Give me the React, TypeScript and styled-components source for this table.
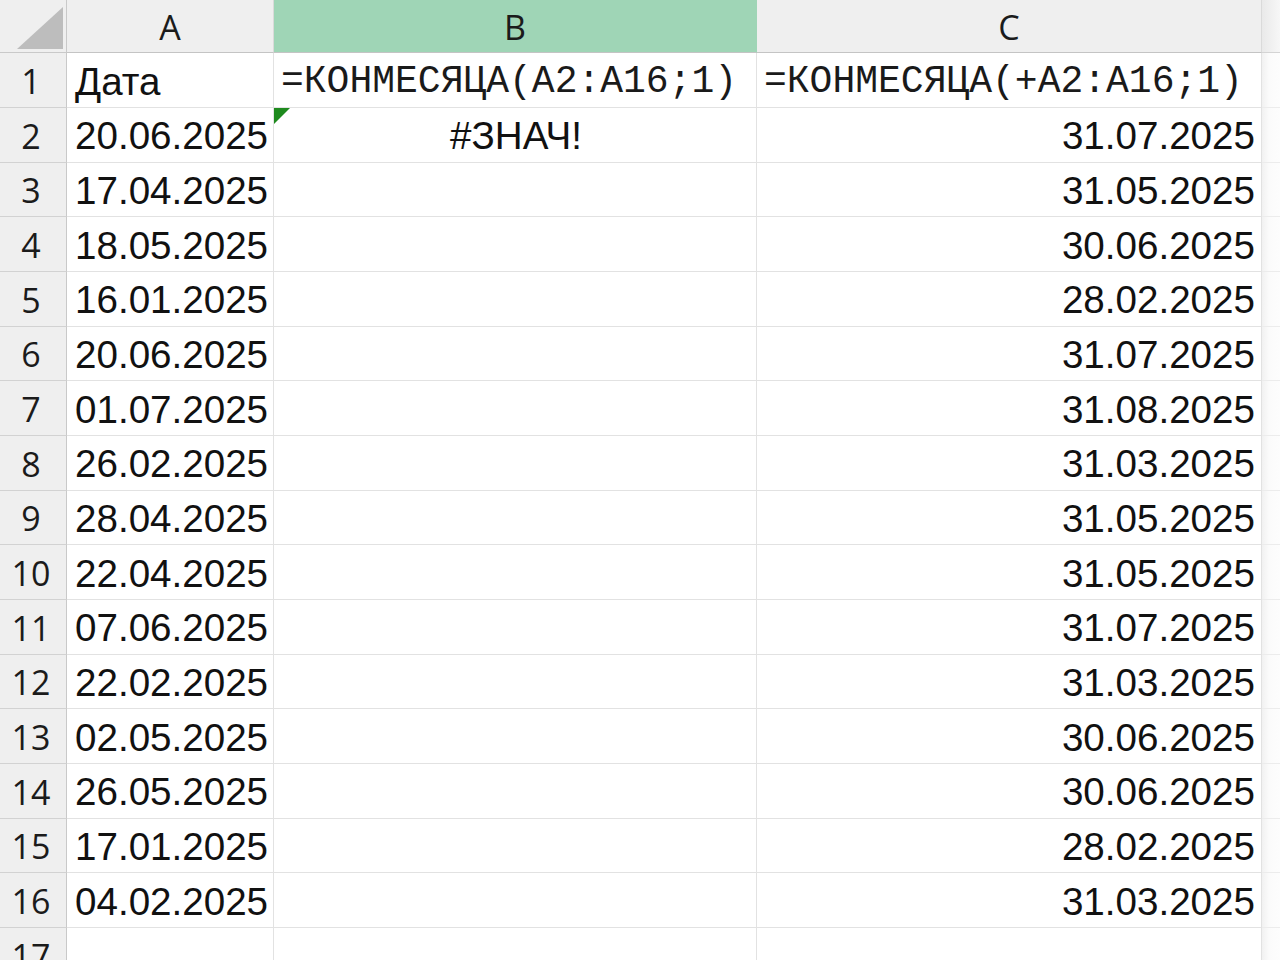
import React from "react";
import styled, { createGlobalStyle, css } from "styled-components";

const Global = createGlobalStyle`
  html, body { margin: 0; padding: 0; background: #ffffff; overflow: hidden; }
  body { width: 1280px; height: 960px; }
`;

const Sheet = styled.div`
  display: grid;
  grid-template-columns: 67px 207px 483px 505px 18px;
  grid-template-rows: 53px 55px repeat(16, 54.67px);
  width: 1280px;
  height: 960px;
  overflow: hidden;
  font-family: "Liberation Sans", Arial, sans-serif;
  color: #111;
`;

const Corner = styled.div`
  background: #efefef;
  border-right: 1px solid #c9c9c9;
  border-bottom: 1px solid #c9c9c9;
  position: relative;
  svg { position: absolute; right: 3px; bottom: 3px; }
`;

const ColHead = styled.div<{ $active?: boolean }>`
  background: ${(p) => (p.$active ? "#9fd5b6" : "#efefef")};
  border-right: 1px solid ${(p) => (p.$active ? "#9fd5b6" : "#dadada")};
  border-bottom: 1px solid #c4c4c4;
  display: flex;
  align-items: center;
  justify-content: center;
  font-family: "Open Sans", "Liberation Sans", sans-serif;
  font-size: 34px;
  color: #1b1b1b;
  padding-top: 2px;
`;

const FillHead = styled.div`
  background: linear-gradient(90deg, #e9e9e9, #f7f7f7);
  border-bottom: 1px solid #d4d4d4;
`;

const RowHead = styled.div`
  background: #efefef;
  border-right: 1px solid #c9c9c9;
  border-bottom: 1px solid #d2d2d2;
  display: flex;
  align-items: center;
  justify-content: center;
  font-family: "Open Sans", "Liberation Sans", sans-serif;
  font-size: 34px;
  color: #1b1b1b;
  padding: 2px 4px 0 0;
`;

const Cell = styled.div<{ $align?: "left" | "center" | "right"; $mono?: boolean }>`
  position: relative;
  background: #ffffff;
  border-right: 1px solid #e2e2e2;
  border-bottom: 1px solid #e2e2e2;
  display: flex;
  align-items: center;
  padding: 3px 6px 0 8px;
  white-space: nowrap;
  overflow: visible;
  font-size: 38.6px;
  justify-content: ${(p) =>
    p.$align === "right" ? "flex-end" : p.$align === "center" ? "center" : "flex-start"};
  ${(p) =>
    p.$mono &&
    css`
      font-family: "Liberation Mono", "Courier New", monospace;
      font-size: 38px;
      padding-left: 7px;
      color: #1a1a1a;
    `}
`;

const FillCell = styled.div`
  background: linear-gradient(90deg, #f1f1f1, #fbfbfb 40%, #fdfdfd);
  border-bottom: 1px solid #ececec;
`;

const ErrorMark = styled.span`
  position: absolute;
  left: 0;
  top: 0;
  width: 0;
  height: 0;
  border-top: 16px solid #1e8a1e;
  border-right: 16px solid transparent;
`;

const dates = [
  "20.06.2025", "17.04.2025", "18.05.2025", "16.01.2025", "20.06.2025",
  "01.07.2025", "26.02.2025", "28.04.2025", "22.04.2025", "07.06.2025",
  "22.02.2025", "02.05.2025", "26.05.2025", "17.01.2025", "04.02.2025",
];
const ends = [
  "31.07.2025", "31.05.2025", "30.06.2025", "28.02.2025", "31.07.2025",
  "31.08.2025", "31.03.2025", "31.05.2025", "31.05.2025", "31.07.2025",
  "31.03.2025", "30.06.2025", "30.06.2025", "28.02.2025", "31.03.2025",
];

export default function App() {
  return (
    <>
      <Global />
      <Sheet>
        <Corner>
          <svg width="46" height="42" viewBox="0 0 46 42">
            <polygon points="46,0 46,42 0,42" fill="#bdbdbd" />
          </svg>
        </Corner>
        <ColHead>A</ColHead>
        <ColHead $active>B</ColHead>
        <ColHead>C</ColHead>
        <FillHead />

        <RowHead>1</RowHead>
        <Cell>Дата</Cell>
        <Cell $mono>=КОНМЕСЯЦА(А2:А16;1)</Cell>
        <Cell $mono>=КОНМЕСЯЦА(+А2:А16;1)</Cell>
        <FillCell />

        {dates.map((d, i) => (
          <React.Fragment key={i}>
            <RowHead>{i + 2}</RowHead>
            <Cell>{d}</Cell>
            <Cell $align="center">
              {i === 0 && (
                <>
                  <ErrorMark />
                  #ЗНАЧ!
                </>
              )}
            </Cell>
            <Cell $align="right">{ends[i]}</Cell>
            <FillCell />
          </React.Fragment>
        ))}

        <RowHead>17</RowHead>
        <Cell />
        <Cell />
        <Cell />
        <FillCell />
      </Sheet>
    </>
  );
}
